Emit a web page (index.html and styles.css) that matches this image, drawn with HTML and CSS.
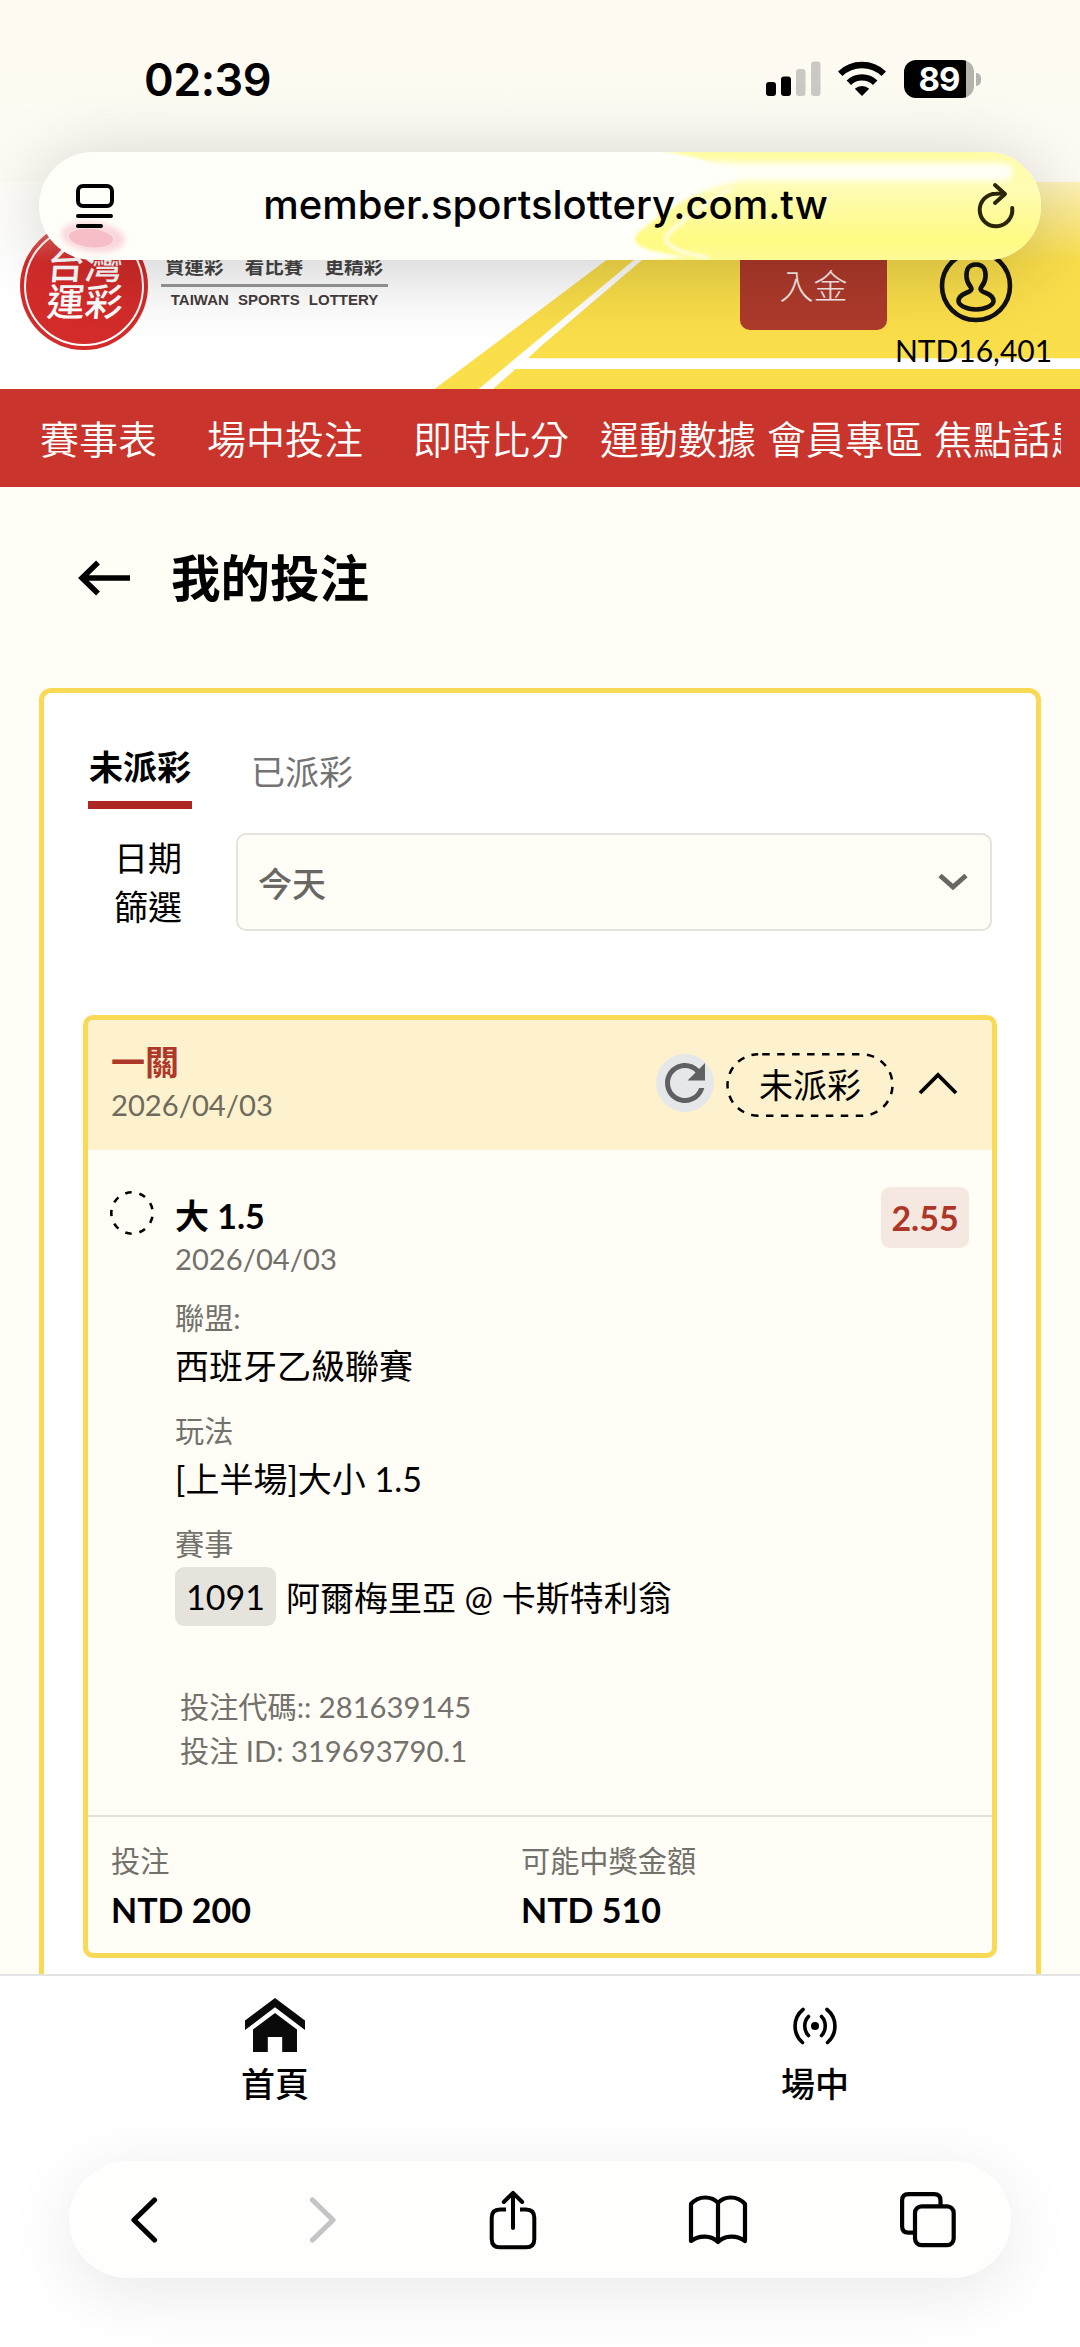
FILE: index.html
```html
<!DOCTYPE html>
<html lang="zh-Hant">
<head>
<meta charset="utf-8">
<title>我的投注</title>
<link rel="stylesheet" href="styles.css">
</head>
<body>
<div class="screen">
  <div class="status">
    <span class="clock">02:39</span>
    <div class="status-icons">
      <svg width="55" height="36" viewBox="0 0 55 36">
        <rect x="0" y="21" width="10" height="14" rx="3"/>
        <rect x="15" y="15.500" width="10" height="19.500" rx="3"/>
        <rect x="30" y="8" width="9.500" height="27" rx="3" fill="#cac9c3"/>
        <rect x="45" y="0.500" width="9.500" height="34.500" rx="3" fill="#cac9c3"/>
      </svg>
      <svg class="wifi" width="48" height="36" viewBox="0 0 48 36">
        <path d="M24 35 L16.800 27.800 A10.500 10.500 0 0 1 31.200 27.800 Z"/>
        <path d="M10.800 21.700 A19 19 0 0 1 37.200 21.700" fill="none" stroke="#000" stroke-width="6.400"/>
        <path d="M2.200 12.800 A31.500 31.500 0 0 1 45.800 12.800" fill="none" stroke="#000" stroke-width="6.400"/>
      </svg>
      <div class="battery"><span>89</span></div>
      <i class="battery-tip"></i>
    </div>
  </div>

  <header class="site-header">
    <svg class="pitch" width="1080" height="207" viewBox="0 0 1080 207">
      <path fill="#fade4a" d="M434.600 207 L540 128 L710 0 H1080 V207 Z"/>
      <path fill="#fff" d="M478.700 207 L540 156 L634 78 L728 0 H738 L642 78 L540 165 L528 176.300 H1080 V187 H515.500 L493 207 Z"/>
    </svg>
    <div class="brand">
      <div class="seal"><div class="seal-text"><span>台灣</span><span>運彩</span></div></div>
      <div class="slogan">
        <div class="slogan-zh"><span>買運彩</span><span>看比賽</span><span>更精彩</span></div>
        <div class="slogan-en">TAIWAN SPORTS LOTTERY</div>
      </div>
    </div>
    <div class="account">
      <div class="deposit">入金</div>
      <div class="user">
        <svg width="76" height="76" viewBox="0 0 76 76" fill="none" stroke="#111" stroke-width="4.600">
          <circle cx="38" cy="38" r="34"/>
          <path d="M38 16.500 C30 16.500 28 22 28.500 29 C28.800 34 31 37 33 39.500 C34.500 42 32 43.500 28 45 C23 47 20.500 49 20.500 53 C20.500 57 28 61.500 38 61.500 S55.500 57 55.500 53 C55.500 49 53 47 48 45 C44 43.500 41.500 42 43 39.500 C45 37 47.200 34 47.500 29 C48 22 46 16.500 38 16.500 Z"/>
        </svg>
        <div class="balance">NTD16,401</div>
      </div>
    </div>
    <div class="fade"></div>
  </header>

  <nav class="menu">
    <span class="wide">賽事表</span><span class="wide">場中投注</span><span class="mid">即時比分</span><span>運動數據</span><span>會員專區</span><span>焦點話題</span>
  </nav>

  <main>
    <div class="title-row">
      <svg width="54" height="40" viewBox="0 0 54 40" fill="none" stroke="#000" stroke-width="5.500">
        <path d="M53 20 H5 M21 4.500 L5 20 L21 35.500"/>
      </svg>
      <h1>我的投注</h1>
    </div>
    <section class="panel">
      <div class="tabs"><span class="tab on">未派彩</span><span class="tab">已派彩</span></div>
      <div class="filter">
        <div class="filter-label">日期<br>篩選</div>
        <div class="select"><span>今天</span>
          <svg width="30" height="18" viewBox="0 0 30 18" fill="none" stroke="#686763" stroke-width="5"><path d="M2 2.500 L15 14 L28 2.500"/></svg>
        </div>
      </div>
      <article class="card">
        <div class="card-head">
          <div class="grow"><div class="combo">一關</div><div class="date head-date">2026/04/03</div></div>
          <div class="refresh"><svg width="60" height="60" viewBox="0 0 24 24"><path fill="#5f6063" d="M17.650 6.350C16.200 4.900 14.210 4 12 4c-4.420 0-7.990 3.580-7.990 8s3.570 8 7.990 8c3.730 0 6.840-2.550 7.730-6h-2.080c-.82 2.330-3.040 4-5.650 4-3.310 0-6-2.690-6-6s2.690-6 6-6c1.660 0 3.140.69 4.220 1.780L13 11h7V4l-2.350 2.350z"/></svg></div>
          <div class="state">
            <svg width="168" height="64" viewBox="0 0 168 64"><rect x="1.500" y="1.300" width="165" height="61.400" rx="30.700" fill="none" stroke="#000" stroke-width="2.500" stroke-dasharray="7.480 7.480" stroke-dashoffset="-4"/></svg>
            <span>未派彩</span>
          </div>
          <svg class="up" width="40" height="24" viewBox="0 0 40 24" fill="none" stroke="#000" stroke-width="3.800"><path d="M2 22 L20 4 L38 22"/></svg>
        </div>
        <div class="leg">
          <svg class="ring" width="46" height="46" viewBox="0 0 46 46"><circle cx="23" cy="23" r="20.700" fill="none" stroke="#000" stroke-width="2.600" pathLength="360" stroke-dasharray="18 22" stroke-dashoffset="9" transform="rotate(180 23 23)"/></svg>
          <div class="grow">
            <div class="pick">大 1.5</div>
            <div class="date">2026/04/03</div>
            <div class="label">聯盟:</div><div class="value">西班牙乙級聯賽</div>
            <div class="label">玩法</div><div class="value">[上半場]大小 1.5</div>
            <div class="label">賽事</div>
            <div class="match"><span class="code">1091</span><span>阿爾梅里亞 @ 卡斯特利翁</span></div>
            <div class="ids"><div>投注代碼:: 281639145</div><div>投注 ID: 319693790.1</div></div>
          </div>
          <div class="odds">2.55</div>
        </div>
        <div class="card-foot">
          <div><div class="foot-label">投注</div><div class="amount">NTD 200</div></div>
          <div><div class="foot-label">可能中獎金額</div><div class="amount">NTD 510</div></div>
        </div>
      </article>
    </section>
  </main>

  <footer class="bottom">
    <div class="site-tabs">
      <div class="site-tab home">
        <svg width="60" height="54" viewBox="0 0 60 54" fill="#0a0a0a">
          <path d="M30 0 L60 22.500 V32 L30 9.200 L0 32 V22.500 Z"/>
          <path d="M30 15 L52 31.500 V54 H37.200 V39 H22.800 V54 H8 V31.500 Z"/>
        </svg>
        <span>首頁</span>
      </div>
      <div class="site-tab live">
        <svg width="50" height="54" viewBox="0 0 50 54" fill="none" stroke="#000" stroke-width="3.600" stroke-linecap="round">
          <circle cx="25" cy="28" r="4" fill="#000" stroke="none"/>
          <path d="M18.500 18.500 C13.500 23.500 13.500 32.500 18.500 37.500 M31.500 18.500 C36.500 23.500 36.500 32.500 31.500 37.500"/>
          <path d="M13 11.500 C2.500 20 2.500 36 12.500 44.500 M37 11.500 C47.500 20 47.500 36 37.500 44.500"/>
        </svg>
        <span>場中</span>
      </div>
    </div>
    <div class="toolbar">
      <svg width="28" height="48" viewBox="0 0 28 48" fill="none" stroke="#000" stroke-width="5.200" stroke-linecap="round" stroke-linejoin="round"><path d="M24.500 4 L4 24 L24.500 44"/></svg>
      <svg width="28" height="48" viewBox="0 0 28 48" fill="none" stroke="#c4c4c4" stroke-width="5.200" stroke-linecap="round" stroke-linejoin="round"><path d="M3.500 4 L24 24 L3.500 44"/></svg>
      <svg width="50" height="62" viewBox="0 0 50 62" fill="none" stroke="#000" stroke-width="4" stroke-linecap="round" stroke-linejoin="round">
        <path d="M18 20.500 H12 Q3.700 20.500 3.700 28.800 V50 Q3.700 58.300 12 58.300 H38 Q46.300 58.300 46.300 50 V28.800 Q46.300 20.500 38 20.500 H32" stroke-linecap="butt"/>
        <path d="M25 39 V4 M15.800 13 L25 3.800 L34.200 13"/>
      </svg>
      <svg width="60" height="52" viewBox="0 0 60 52" fill="none" stroke="#000" stroke-width="4.200" stroke-linecap="round" stroke-linejoin="round">
        <path d="M30 9 C24 2 11 1 3 10 V47 C11 41 23 41 30 48 C37 41 49 41 57 47 V10 C49 1 36 2 30 9 Z M30 9 V48"/>
      </svg>
      <svg width="58" height="58" viewBox="0 0 58 58" fill="none" stroke="#000" stroke-width="4.200">
        <path d="M14 41.700 H9.500 Q3.100 41.700 3.100 35.300 V9.500 Q3.100 3.100 9.500 3.100 H35.200 Q41.500 3.100 41.500 9.500 V14"/>
        <rect x="16" y="15.400" width="38.700" height="38.700" rx="6.500"/>
      </svg>
    </div>
  </footer>

  <div class="address">
    <svg class="glass" width="1002" height="108" viewBox="0 0 1002 108">
      <defs>
        <filter id="soft" x="-10%" y="-30%" width="120%" height="160%"><feGaussianBlur stdDeviation="3"/></filter>
        <filter id="fine" x="-10%" y="-30%" width="120%" height="160%"><feGaussianBlur stdDeviation="1.500"/></filter>
        <linearGradient id="lemon" x1="0" y1="0" x2="0" y2="1">
          <stop offset="0" stop-color="#fffca4"/><stop offset=".35" stop-color="#fffcb4"/><stop offset=".8" stop-color="#fffb82"/><stop offset="1" stop-color="#fffb9a"/>
        </linearGradient>
      </defs>
      <path filter="url(#fine)" fill="url(#lemon)" d="M612 -4 C640 3 664 5 676 14 C676 30 664 38 650 45 C630 57 608 72 598 82 C590 92 604 100 650 105 L560 112 H1010 V-4 Z"/>
      <rect x="640" y="11" width="334" height="18" rx="9" fill="#fffff6" filter="url(#soft)"/>
      <path d="M600 0 C630 8 660 12 690 13 L700 28 L650 44 L600 20 Z" fill="#fffffa" filter="url(#soft)"/>
      <path d="M692 36 C670 50 642 68 629 82 C622 92 636 100 670 106" fill="none" stroke="#fffde0" stroke-width="4" filter="url(#fine)"/>
      <ellipse cx="54" cy="85" rx="32" ry="15" fill="#fad5db" filter="url(#soft)" transform="rotate(7 54 85)"/>
      <ellipse cx="52" cy="86" rx="23" ry="10" fill="#f6bfc8" stroke="#fbdfe1" stroke-width="1.500" transform="rotate(5 52 86)"/>
    </svg>
    <svg class="reader" width="40" height="46" viewBox="0 0 40 46" fill="none" stroke="#000" stroke-width="4" stroke-linecap="round">
      <rect x="3" y="3" width="34" height="20" rx="5"/><path d="M3 33 H36 M3 43 H26"/>
    </svg>
    <span class="url">member.sportslottery.com.tw</span>
    <svg class="reload" width="40" height="48" viewBox="0 0 40 48" fill="none" stroke="#2b2608" stroke-width="4" stroke-linecap="round" stroke-linejoin="round">
      <path d="M36.200 26 A16.300 16.300 0 1 1 20 11.700 Q25 11.200 28.500 12 M19 3 L29 12 L19 21"/>
    </svg>
  </div>
</div>
</body>
</html>
```
FILE: styles.css
```css
* { box-sizing: border-box; }
body { margin: 0; }
.screen {
  position: relative;
  width: 1080px;
  height: 2347px;
  overflow: hidden;
  display: flex;
  flex-direction: column;
  background: #fffdf5;
  color: #000;
  font-family: Lato, "Noto Sans CJK TC", sans-serif;
}
svg { display: block; flex: none; }
.grow { flex: 1; }

/* Status bar */
.status {
  height: 182px;
  padding: 56px 99px 0 144px;
  display: flex;
  justify-content: space-between;
  align-items: flex-start;
  background: linear-gradient(#fffaf2, #fdfcf4);
}
.clock {
  font: 600 45px/48px Inter, sans-serif;
  letter-spacing: -0.5px;
}
.status-icons { display: flex; align-items: center; padding-top: 4px; }
.wifi { margin-left: 17px; }
.battery {
  width: 70px;
  height: 38px;
  margin-left: 18px;
  border-radius: 12px;
  background: linear-gradient(90deg, #000 62px, #b4b3ae 62px);
  color: #fff;
  font: 700 33px/38px Inter, sans-serif;
  letter-spacing: -1px;
  text-align: center;
}
.battery-tip { width: 5px; height: 13px; margin-left: 2px; border-radius: 0 5px 5px 0; background: #b4b3ae; }

/* Site header */
.site-header {
  position: relative;
  height: 207px;
  display: flex;
  justify-content: space-between;
  background: #fff;
}
.pitch, .fade { position: absolute; inset: 0; }
.fade { background: linear-gradient(rgba(255,253,245,.65), rgba(255,253,245,0) 80px); }
.brand, .account { position: relative; display: flex; }
.brand { padding: 40px 0 0 20px; align-items: flex-start; }
.seal {
  width: 128px;
  height: 128px;
  padding: 4px;
  border-radius: 50%;
  background: #d42c2a;
}
.seal-text {
  height: 120px;
  padding: 18px 0 0 2px;
  border: 2px solid #fff;
  border-radius: 50%;
  color: #fff;
  text-align: center;
  font-size: 38px;
  font-weight: 500;
  line-height: 37px;
}
.seal-text span { display: block; transform: skewX(-5deg); }
.slogan { width: 227px; margin: 33px 0 0 13px; }
.slogan-zh {
  display: flex;
  justify-content: space-between;
  padding: 0 5px 0 4px;
  height: 32px;
  border-bottom: 3px solid #999;
  color: #454545;
  font-size: 19.500px;
  font-weight: 700;
  line-height: 24px;
}
.slogan-en {
  text-align: center;
  color: #453c3b;
  font: 700 15px/26px "Liberation Sans", sans-serif;
  word-spacing: 5px;
  white-space: nowrap;
}
.deposit {
  width: 147px;
  height: 98px;
  margin-top: 50px;
  border-radius: 0 0 10px 10px;
  background: #ae3a2b;
  color: #fbeaea;
  text-align: center;
  font-size: 34px;
  font-weight: 300;
  line-height: 108px;
}
.user { width: 193px; padding-top: 66px; display: flex; flex-direction: column; align-items: center; }
.user svg { margin-right: 15px; }
.balance { margin-left: -20px; padding-top: 8px; font-size: 30px; line-height: 36px; }

/* Menu */
.menu {
  height: 98px;
  margin: 0;
  padding: 0 0 2px 40px;
  border-right: 19px solid #c9352c;
  display: flex;
  align-items: center;
  overflow: hidden;
  background: #c9352c;
  color: #fff;
  font-size: 39px;
  font-weight: 350;
  white-space: nowrap;
}
.menu span { margin-right: 11px; flex: none; }
.menu .wide { margin-right: 50px; }
.menu .mid { margin-right: 31px; }

/* Content */
main { height: 1487px; padding: 61px 39px 0; overflow: hidden; }
.title-row { display: flex; align-items: center; gap: 40px; padding-left: 38px; height: 60px; }
h1 { margin: 0; font-size: 49.500px; font-weight: 700; line-height: 60px; }
.panel {
  height: 1400px;
  margin-top: 80px;
  padding: 50px 39px 0;
  border: 5px solid #fad956;
  border-radius: 12px;
  background: #fff;
}
.tabs { display: flex; align-items: flex-start; gap: 59px; padding-left: 5px; font-size: 34px; line-height: 48px; }
.tab { padding-top: 5px; color: #737373; }
.tab.on { padding: 0 1px 10px; border-bottom: 8px solid #ad2622; color: #000; font-weight: 700; }
.filter { display: flex; margin-top: 24px; padding: 0 5px 0 31px; gap: 54px; }
.filter-label { font-size: 34px; line-height: 49px; text-align: right; }
.select {
  flex: 1;
  height: 98px;
  padding: 0 22px 0 20px;
  border: 2.500px solid #e6e2dc;
  border-radius: 10px;
  display: flex;
  align-items: center;
  justify-content: space-between;
  background: #fffdf6;
  color: #686763;
  font-size: 34px;
  font-weight: 500;
}
.card {
  margin-top: 84px;
  height: 943px;
  border: 5px solid #fad956;
  border-radius: 10px;
  overflow: hidden;
  background: #fffdf6;
}
.card-head {
  height: 130px;
  padding: 0 34px 4px 23px;
  display: flex;
  align-items: center;
  background: #fdf2cd;
}
.combo { color: #b0382a; font-size: 34px; font-weight: 700; line-height: 44px; }
.date { color: #73716c; font-size: 29.200px; line-height: 42px; }
.head-date { color: #6e6b5d; }
.refresh {
  width: 58px;
  height: 58px;
  border-radius: 50%;
  background: #e6e7e9;
  display: flex;
  align-items: center;
  justify-content: center;
}
.state { position: relative; width: 168px; height: 64px; margin: 4px 24px 0 12px; text-align: center; font-size: 34px; line-height: 64px; }
.state svg { position: absolute; inset: 0; }
.leg { height: 665px; padding: 37px 23px 0 21px; display: flex; align-items: flex-start; }
.ring { margin: 3px 20px 0 0; }
.leg .grow { padding-top: 7px; }
.pick { font-size: 34px; font-weight: 700; line-height: 44px; }
.label { margin-top: 17px; color: #73716c; font-size: 29.200px; line-height: 40px; }
.date + .label { margin-top: 18px; }
.value { font-size: 34px; line-height: 56px; }
.match { display: flex; align-items: center; gap: 10px; margin-top: 3px; font-size: 34px; }
.code { height: 59px; padding: 0 11px; border-radius: 9px; background: #e6e3dd; line-height: 59px; }
.ids { margin-top: 59px; padding-left: 5px; color: #73716c; font-size: 29.200px; line-height: 44px; }
.odds {
  width: 88px;
  height: 61px;
  border-radius: 9px;
  background: #f5e8e0;
  color: #ad3627;
  text-align: center;
  font-size: 34px;
  font-weight: 700;
  line-height: 61px;
}
.card-foot { display: grid; grid-template-columns: 410px 1fr; padding: 24px 23px 0; border-top: 2.500px solid #e5e2dc; }
.foot-label { color: #73716c; font-size: 29.200px; line-height: 40px; }
.amount { font-size: 34px; font-weight: 700; line-height: 58px; }

/* Bottom bars */
.bottom { flex: 1; border-top: 2px solid #e4e4e4; background: #fff; }
.site-tabs { display: flex; height: 185px; padding-top: 22px; }
.site-tab { display: flex; flex-direction: column; align-items: center; gap: 7px; font-size: 34px; font-weight: 500; line-height: 50px; }
.home { width: 560px; }
.live { width: 540px; }
.toolbar {
  height: 117px;
  margin: 0 69px;
  padding: 0 54px 0 61px;
  border-radius: 59px;
  background: #fefffc;
  box-shadow: 0 14px 70px rgba(0,0,0,.09);
  display: flex;
  align-items: center;
  justify-content: space-between;
}

/* Floating address bar */
.address {
  position: absolute;
  left: 39px;
  top: 152px;
  width: 1002px;
  height: 108px;
  border-radius: 54px;
  overflow: visible;
  background: #fffffa;
  box-shadow: 0 10px 80px rgba(0,0,0,.2);
  display: flex;
  align-items: center;
  justify-content: space-between;
  padding: 0 25px 0 36px;
}
.glass { position: absolute; inset: 0; border-radius: 54px; }
.reader, .url, .reload { position: relative; }
.url { font: 500 40px/60px Inter, sans-serif; margin-top: -2px; }
```
